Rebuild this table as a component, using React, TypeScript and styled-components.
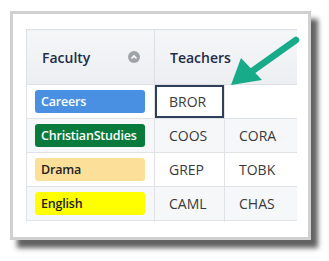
import React from 'react';
import styled, { createGlobalStyle } from 'styled-components';

const GlobalStyle = createGlobalStyle`
  html, body {
    margin: 0;
    padding: 0;
    background: #ffffff;
  }
  body {
    font-family: 'Open Sans', 'Noto Sans', sans-serif;
  }
`;

const Page = styled.div`
  width: 329px;
  height: 261px;
  padding: 11px 0 0 10px;
  box-sizing: border-box;
`;

const Frame = styled.div`
  position: relative;
  width: 301px;
  height: 229px;
  box-sizing: border-box;
  border: 3px solid #d0d0d0;
  background: #ffffff;
  padding: 15px 0 0 13px;
  box-shadow: 7px 8px 5px rgba(70, 70, 70, 0.85);
`;

const Viewport = styled.div`
  width: 271px;
  height: 193px;
  overflow: hidden;
`;

const Grid = styled.table`
  border-collapse: collapse;
  table-layout: fixed;
  width: 298px;
  color: #333;

  col.faculty {
    width: 128px;
  }
  col.teacher {
    width: 70px;
  }
`;

const HeadCell = styled.th`
  height: 55px;
  padding: 0 0 0 15px;
  text-align: left;
  font-size: 14px;
  font-weight: 600;
  color: #1f2c47;
  background: linear-gradient(#f5f6f8, #eceef1);
  border: 1px solid #dcdfe4;
  box-sizing: border-box;
`;

const HeadInner = styled.div`
  display: flex;
  align-items: center;
  justify-content: space-between;
  padding-right: 14px;
`;

const SortIcon = styled.span`
  display: inline-flex;
  align-items: center;
  justify-content: center;
  width: 12px;
  height: 12px;
  border-radius: 50%;
  background: #9ea3aa;
`;

const Row = styled.tr<{ $alt?: boolean }>`
  background: ${(p) => (p.$alt ? '#f6f7f9' : '#ffffff')};
`;

const Cell = styled.td<{ $selected?: boolean }>`
  height: 34px;
  padding: 0 0 0 14px;
  font-size: 14px;
  color: #3a3a3a;
  border: 1px solid #dfe2e6;
  box-sizing: border-box;
  box-shadow: ${(p) => (p.$selected ? 'inset 0 0 0 2px #2f3e59' : 'none')};
  background: ${(p) => (p.$selected ? '#ffffff' : 'transparent')};
`;

const BadgeCell = styled.td`
  height: 34px;
  padding: 0 8px 0 8px;
  border: 1px solid #dfe2e6;
  box-sizing: border-box;
`;

const Badge = styled.div<{ $bg: string; $fg: string }>`
  height: 23px;
  width: 110px;
  border-radius: 3px;
  background: ${(p) => p.$bg};
  color: ${(p) => p.$fg};
  font-size: 12.5px;
  font-weight: 600;
  line-height: 23px;
  padding-left: 6px;
  box-sizing: border-box;
  white-space: nowrap;
  letter-spacing: -0.2px;
`;

const Arrow = styled.svg`
  position: absolute;
  left: 0;
  top: 0;
  pointer-events: none;
`;

const faculties = [
  { name: 'Careers', bg: '#4a90e2', fg: '#ffffff', teachers: ['BROR', ''] },
  { name: 'ChristianStudies', bg: '#087a3c', fg: '#ffffff', teachers: ['COOS', 'CORA'] },
  { name: 'Drama', bg: '#fce09a', fg: '#222222', teachers: ['GREP', 'TOBK'] },
  { name: 'English', bg: '#ffff00', fg: '#222222', teachers: ['CAML', 'CHAS'] },
  { name: '', bg: 'transparent', fg: '#222222', teachers: ['', ''] },
];

const App = () => (
  <>
    <GlobalStyle />
    <Page>
      <Frame>
        <Viewport>
          <Grid>
            <colgroup>
              <col className="faculty" />
              <col className="teacher" />
              <col />
            </colgroup>
            <thead>
              <tr>
                <HeadCell>
                  <HeadInner>
                    Faculty
                    <SortIcon>
                      <svg width="8" height="6" viewBox="0 0 8 6">
                        <path d="M1.5 4.5 L4 2 L6.5 4.5" stroke="#fff" strokeWidth="1.6" fill="none" />
                      </svg>
                    </SortIcon>
                  </HeadInner>
                </HeadCell>
                <HeadCell colSpan={2}>Teachers</HeadCell>
              </tr>
            </thead>
            <tbody>
              {faculties.map((f, i) => (
                <Row key={i} $alt={i % 2 === 1}>
                  <BadgeCell>
                    {f.name && (
                      <Badge $bg={f.bg} $fg={f.fg}>
                        {f.name}
                      </Badge>
                    )}
                  </BadgeCell>
                  <Cell $selected={i === 0}>{f.teachers[0]}</Cell>
                  <Cell>{f.teachers[1]}</Cell>
                </Row>
              ))}
            </tbody>
          </Grid>
        </Viewport>
        <Arrow width="301" height="229" viewBox="0 0 301 229">
          <line x1="283" y1="26" x2="238" y2="58" stroke="#17ab89" strokeWidth="6.5" strokeLinecap="round" />
          <polygon points="218,71 228,44 249,66" fill="#17ab89" />
        </Arrow>
      </Frame>
    </Page>
  </>
);

export default App;
